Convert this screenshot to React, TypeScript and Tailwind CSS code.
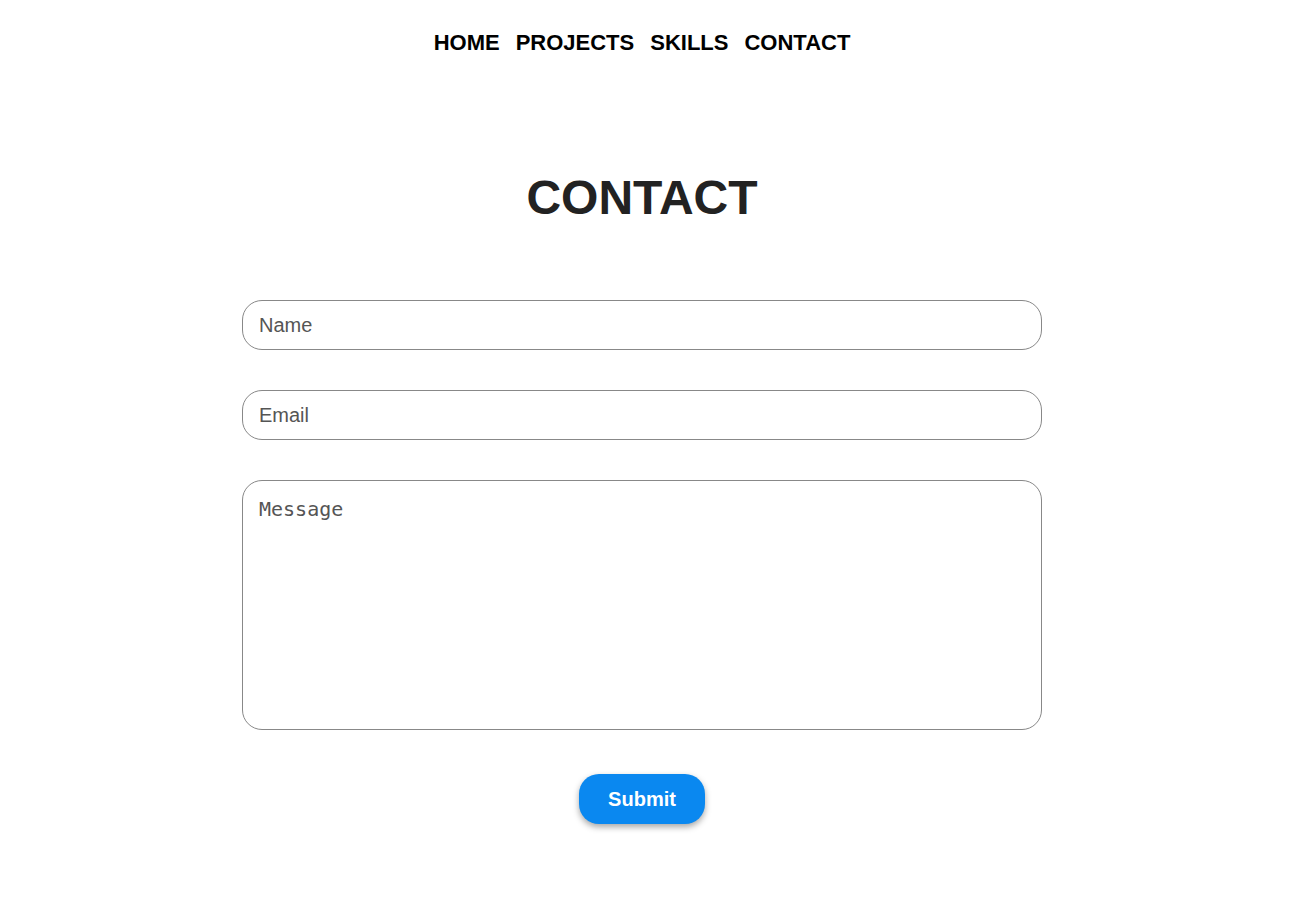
export default function App() {
  const links = ["HOME", "PROJECTS", "SKILLS", "CONTACT"];

  return (
    <div className="min-h-screen w-[1284px] bg-white font-['Liberation_Sans',Arial,sans-serif]">
      {/* Nav */}
      <nav className="flex justify-center gap-4 pt-[30px]">
        {links.map((link) => (
          <a
            key={link}
            href="#"
            className="text-[22px] leading-[25px] font-bold text-black"
          >
            {link}
          </a>
        ))}
      </nav>

      {/* Heading */}
      <h1 className="mt-[115px] text-center text-[48px] leading-[56px] font-bold text-[#222]">
        CONTACT
      </h1>

      {/* Form */}
      <form className="mx-auto mt-[74px] flex w-[800px] flex-col items-center">
        <input
          type="text"
          placeholder="Name"
          className="h-[50px] w-full rounded-[20px] border border-[#888] px-4 text-[20px] placeholder:text-[#555] outline-none"
        />
        <input
          type="email"
          placeholder="Email"
          className="mt-10 h-[50px] w-full rounded-[20px] border border-[#888] px-4 text-[20px] placeholder:text-[#555] outline-none"
        />
        <textarea
          placeholder="Message"
          className="mt-10 h-[250px] w-full resize-none rounded-[20px] border border-[#888] px-4 py-[14px] font-['DejaVu_Sans_Mono',monospace] text-[20px] leading-[28px] placeholder:text-[#555] outline-none"
        />
        <button
          type="submit"
          className="mt-[44px] h-[50px] rounded-[20px] bg-[#0a88f0] px-[29px] text-[20px] font-bold text-white shadow-[0_3px_6px_rgba(0,0,0,0.35)]"
        >
          Submit
        </button>
      </form>
    </div>
  );
}
